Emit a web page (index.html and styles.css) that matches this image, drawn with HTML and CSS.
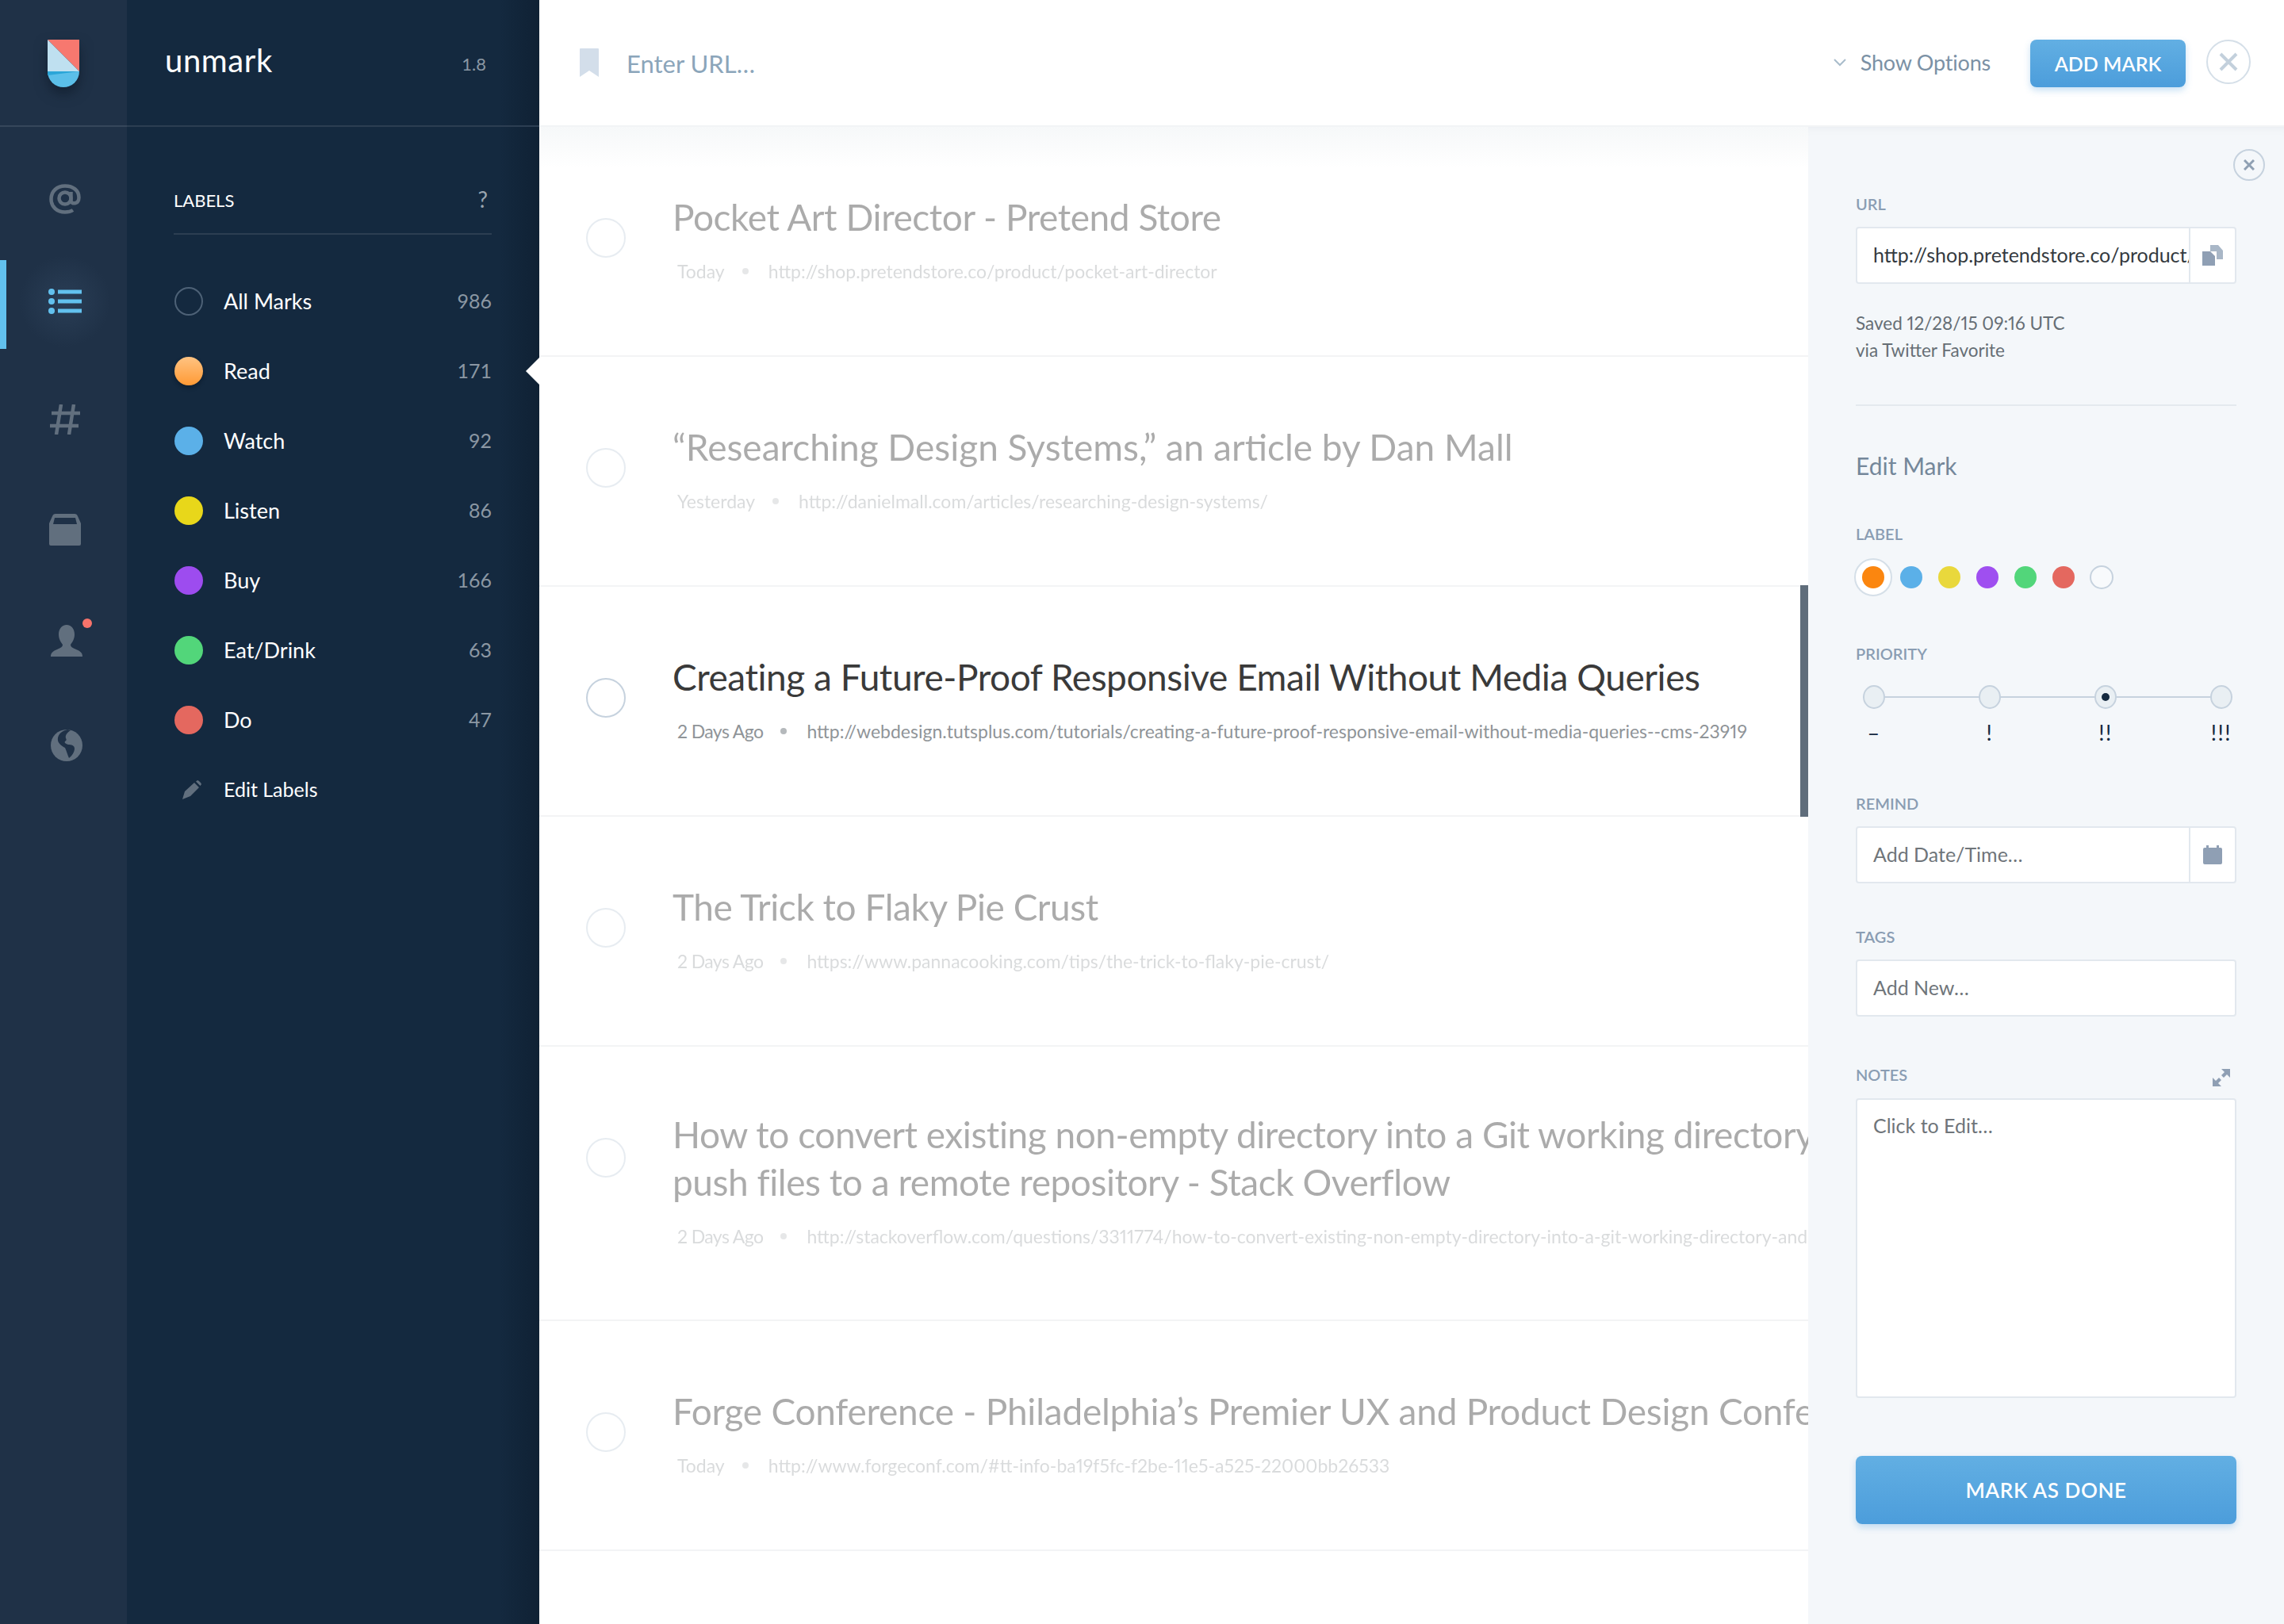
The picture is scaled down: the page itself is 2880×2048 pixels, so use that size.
FILE: index.html
```html
<!DOCTYPE html>
<html lang="en">
<head>
    <meta charset="UTF-8">
    <title>unmark</title>
    <link rel="stylesheet" href="styles.css">
</head>
<body>
<div class="app">
    <div class="rail">
        <div class="rail-logo">
            <svg class="logo" width="40" height="60" viewBox="0 0 40 60">
                <path d="M0 0H40V40Z" fill="#f7786f"/>
                <path d="M0 0L40 40H0Z" fill="#bfe0f0"/>
                <path d="M0 40H40A20 20 0 0 1 0 40Z" fill="#5bbfe9"/>
                <path d="M0 40H40L0 45Z" fill="#2ba6d8"/>
            </svg>
        </div>
        <div class="rail-nav">
            <div class="rail-item at">
                <svg width="40" height="38" viewBox="0 0 40 38" fill="none" stroke="#616f7e" stroke-width="4.500">
                    <circle cx="20" cy="18" r="7.500"/>
                    <path d="M27.500 10V21C27.500 26 37.500 26 37.500 17C37.500 8 30 2.500 20 2.500C10 2.500 2.500 9 2.500 19C2.500 29 10 35.500 20 35.500C24 35.500 27 35 30 33"/>
                </svg>
            </div>
            <div class="rail-item lines active">
                <svg width="42" height="32" viewBox="0 0 42 32" fill="#62c1ee">
                    <circle cx="4" cy="4" r="4"/><circle cx="4" cy="16" r="4"/><circle cx="4" cy="28" r="4"/>
                    <rect x="12" y="1.500" width="30" height="5"/><rect x="12" y="13.500" width="30" height="5"/><rect x="12" y="25.500" width="30" height="5"/>
                </svg>
            </div>
            <div class="rail-item hash">
                <svg width="40" height="38" viewBox="0 0 40 38" fill="none" stroke="#616f7e" stroke-width="4.500">
                    <path d="M15 0L9 38M31 0L25 38M3 11H39M1 27H37"/>
                </svg>
            </div>
            <div class="rail-item box">
                <svg width="40" height="40" viewBox="0 0 40 40">
                    <path fill="#616f7e" fill-rule="evenodd" d="M8 0H32Q35 0 36 3L40 12V38Q40 40 38 40H2Q0 40 0 38V12L4 3Q5 0 8 0ZM7 5L5 13H35L33 5Z"/>
                </svg>
            </div>
            <div class="rail-item person">
                <svg width="40" height="40" viewBox="0 0 40 40">
                    <path fill="#616f7e" d="M20 0C14 0 10 5 10 12C10 18 13 22 15 25C15 28 12 29 8 31C3 33 0 35 0 40H40C40 35 37 33 32 31C28 29 25 28 25 25C27 22 30 18 30 12C30 5 26 0 20 0Z"/>
                </svg>
                <span class="badge"></span>
            </div>
            <div class="rail-item globe">
                <svg width="40" height="40" viewBox="0 0 40 40">
                    <circle cx="20" cy="20" r="20" fill="#616f7e"/>
                    <path fill="#1f3147" d="M21 0C12 2 8 8 9 14C10 18 14 21 18 23C20 27 21 32 23 36C27 33 30 28 30 24C30 20 26 19 22 19C18 18 17 16 18 15C20 14 20 12 19 11C18 8 20 4 25 1Z"/>
                </svg>
            </div>
        </div>
    </div>

    <div class="sidebar">
        <div class="brand">
            <span class="brand-name">unmark</span>
            <span class="brand-version">1.8</span>
        </div>
        <div class="labels">
            <div class="labels-head"><span>LABELS</span><span class="labels-help">?</span></div>
            <div class="label-row"><span class="dot dot-all"></span><span class="label-name">All Marks</span><span class="label-count">986</span></div>
            <div class="label-row"><span class="dot dot-read"></span><span class="label-name">Read</span><span class="label-count">171</span></div>
            <div class="label-row"><span class="dot dot-watch"></span><span class="label-name">Watch</span><span class="label-count">92</span></div>
            <div class="label-row"><span class="dot dot-listen"></span><span class="label-name">Listen</span><span class="label-count">86</span></div>
            <div class="label-row"><span class="dot dot-buy"></span><span class="label-name">Buy</span><span class="label-count">166</span></div>
            <div class="label-row"><span class="dot dot-eat"></span><span class="label-name">Eat/Drink</span><span class="label-count">63</span></div>
            <div class="label-row"><span class="dot dot-do"></span><span class="label-name">Do</span><span class="label-count">47</span></div>
            <div class="label-row edit-row">
                <span class="dot edit-icon">
                    <svg width="24" height="24" viewBox="0 0 24 24"><path fill="#616f7e" d="M0 24L3 14L15 3L21 9L10 20ZM17 1.500L19 0Q20 0 22 2Q24 4 24 5L22.500 7Z"/></svg>
                </span>
                <span class="label-name">Edit Labels</span>
            </div>
        </div>
        <span class="pointer"></span>
    </div>

    <div class="content">
        <div class="topbar">
            <svg class="bookmark" width="24" height="36" viewBox="0 0 24 36"><path fill="#d3deea" d="M1 0H23Q24 0 24 1V36L12 28L0 36V1Q0 0 1 0Z"/></svg>
            <span class="url-hint">Enter URL…</span>
            <svg class="chevron" width="16" height="10" viewBox="0 0 16 10" fill="none" stroke="#a9bccb" stroke-width="2"><path d="M1 1L8 8L15 1"/></svg>
            <span class="show-options">Show Options</span>
            <button class="add-btn">ADD MARK</button>
            <span class="round-close big">
                <svg width="24" height="24" viewBox="0 0 24 24" stroke="#c3d0dc" stroke-width="4"><path d="M2 2L22 22M22 2L2 22"/></svg>
            </span>
        </div>
        <div class="content-body">
            <div class="list">
                <div class="row faded">
                    <span class="check"></span>
                    <div class="row-body">
                        <div class="row-title">Pocket Art Director - Pretend Store</div>
                        <div class="row-meta"><span>Today</span><i></i><span>http://shop.pretendstore.co/product/pocket-art-director</span></div>
                    </div>
                </div>
                <div class="row faded">
                    <span class="check"></span>
                    <div class="row-body">
                        <div class="row-title title-loose">“Researching Design Systems,” an article by Dan Mall</div>
                        <div class="row-meta"><span>Yesterday</span><i></i><span>http://danielmall.com/articles/researching-design-systems/</span></div>
                    </div>
                </div>
                <div class="row current">
                    <span class="check"></span>
                    <div class="row-body">
                        <div class="row-title">Creating a Future-Proof Responsive Email Without Media Queries</div>
                        <div class="row-meta"><span class="days">2 Days Ago</span><i></i><span>http://webdesign.tutsplus.com/tutorials/creating-a-future-proof-responsive-email-without-media-queries--cms-23919</span></div>
                    </div>
                </div>
                <div class="row faded">
                    <span class="check"></span>
                    <div class="row-body">
                        <div class="row-title">The Trick to Flaky Pie Crust</div>
                        <div class="row-meta"><span class="days">2 Days Ago</span><i></i><span>https://www.pannacooking.com/tips/the-trick-to-flaky-pie-crust/</span></div>
                    </div>
                </div>
                <div class="row faded two-line">
                    <span class="check"></span>
                    <div class="row-body">
                        <div class="row-title">How to convert existing non-empty directory into a Git working directory and<br>push files to a remote repository - Stack Overflow</div>
                        <div class="row-meta"><span class="days">2 Days Ago</span><i></i><span>http://stackoverflow.com/questions/3311774/how-to-convert-existing-non-empty-directory-into-a-git-working-directory-and-push-files-to-a-remote</span></div>
                    </div>
                </div>
                <div class="row faded">
                    <span class="check"></span>
                    <div class="row-body">
                        <div class="row-title title-mid">Forge Conference - Philadelphia’s Premier UX and Product Design Conference</div>
                        <div class="row-meta"><span>Today</span><i></i><span>http://www.forgeconf.com/#tt-info-ba19f5fc-f2be-11e5-a525-22000bb26533</span></div>
                    </div>
                </div>
            </div>

            <div class="panel">
                <span class="round-close small">
                    <svg width="14" height="14" viewBox="0 0 14 14" stroke="#8fa0b3" stroke-width="3"><path d="M1 1L13 13M13 1L1 13"/></svg>
                </span>
                <div class="field-label">URL</div>
                <div class="input">
                    <span class="input-text dark">http://shop.pretendstore.co/product/pocket-art-director</span>
                    <span class="input-addon">
                        <svg width="26" height="26" viewBox="0 0 26 26"><path fill="#a9b7c7" d="M10 0H20L26 7V18H18V8H10Z"/><path fill="#8f9fb4" d="M0 8H10L16 14V26H0Z"/></svg>
                    </span>
                </div>
                <div class="saved">Saved 12/28/15 09:16 UTC<br>via Twitter Favorite</div>
                <div class="panel-rule"></div>
                <div class="panel-title">Edit Mark</div>

                <div class="field-label label-head">LABEL</div>
                <div class="swatches">
                    <span class="swatch picked"><span class="swatch-fill orange"></span></span>
                    <span class="swatch"><span class="swatch-fill blue"></span></span>
                    <span class="swatch"><span class="swatch-fill yellow"></span></span>
                    <span class="swatch"><span class="swatch-fill purple"></span></span>
                    <span class="swatch"><span class="swatch-fill green"></span></span>
                    <span class="swatch"><span class="swatch-fill red"></span></span>
                    <span class="swatch"><span class="swatch-fill none"></span></span>
                </div>

                <div class="field-label priority-head">PRIORITY</div>
                <div class="priority-track">
                    <span class="stop"></span>
                    <span class="stop"></span>
                    <span class="stop on"></span>
                    <span class="stop"></span>
                </div>
                <div class="priority-marks">
                    <span>–</span><span>!</span><span>!!</span><span>!!!</span>
                </div>

                <div class="field-label remind-head">REMIND</div>
                <div class="input">
                    <span class="input-text">Add Date/Time…</span>
                    <span class="input-addon">
                        <svg width="24" height="24" viewBox="0 0 24 24"><path fill="#8f9fb4" d="M4 0H7V3H17V0H20V3H22Q24 3 24 5V22Q24 24 22 24H2Q0 24 0 22V5Q0 3 2 3H4Z"/></svg>
                    </span>
                </div>

                <div class="field-label tags-head">TAGS</div>
                <div class="input">
                    <span class="input-text">Add New…</span>
                </div>

                <div class="field-label notes-head">
                    <span>NOTES</span>
                    <svg class="expand" width="22" height="22" viewBox="0 0 22 22"><path fill="#8f9fb4" d="M11 0H22V11L18 7L14 11L11 8L15 4ZM0 22V11L4 15L8 11L11 14L7 18L11 22Z"/></svg>
                </div>
                <div class="notes">Click to Edit…</div>

                <button class="done-btn">MARK AS DONE</button>
            </div>
        </div>
    </div>
</div>
</body>
</html>
```

FILE: styles.css
```css
* {box-sizing: border-box;}
html, body {margin: 0; height: 100%;}
body {font-family: "Lato", "Noto Sans", sans-serif; color: #333; background: #fff; overflow: hidden;}
.app {display: flex; height: 2048px;}

/* icon rail */
.rail {width: 160px; flex: none; background: #1f3147;}
.rail-logo {height: 160px; padding-top: 50px; display: flex; justify-content: center; border-bottom: 2px solid #36475b;}
.logo {filter: drop-shadow(0 8px 8px rgba(10, 20, 32, .55));}
.rail-nav {padding: 72px 0 0 4px;}
.rail-item {display: flex; justify-content: center; position: relative;}
.rail-item.at {margin-bottom: 94px;}
.rail-item.lines {margin-bottom: 114px;}
.rail-item.hash {margin-bottom: 100px;}
.rail-item.box {margin-bottom: 100px;}
.rail-item.person {margin-bottom: 92px; left: 2px;}
.rail-item.globe {left: 2px;}
.rail-item.active::before {content: ""; position: absolute; left: -4px; top: -36px; width: 8px; height: 112px; background: #62c1ee;}
.rail-item.active::after {content: ""; position: absolute; left: 18px; top: -44px; width: 120px; height: 120px; background: radial-gradient(circle, #2a3e56 0, rgba(42, 62, 86, 0) 68%);}
.rail-item.active svg {position: relative; z-index: 1;}
.badge {position: absolute; left: 98px; top: -8px; width: 12px; height: 12px; border-radius: 50%; background: #f7736b;}

/* labels */
.sidebar {width: 520px; flex: none; background: linear-gradient(to right, #14293f 470px, #0f2134 520px); position: relative; color: #fff;}
.brand {height: 160px; padding: 0 67px 0 48px; display: flex; align-items: center; justify-content: space-between; border-bottom: 2px solid #2c3e52;}
.brand-name {font-size: 40px; font-weight: 400; letter-spacing: .6px; padding-bottom: 6px;}
.brand-version {font-size: 22px; font-weight: 400; color: #8b97a3; padding-top: 2px;}
.labels {padding: 0 60px 0 59px;}
.labels-head {height: 136px; padding-top: 80px; margin-bottom: 40px; display: flex; justify-content: space-between; align-items: flex-start; border-bottom: 2px solid #2c3e52; font-size: 22px; font-weight: 400; line-height: 26px;}
.labels-help {font-size: 28px; padding-right: 5px; margin-top: -2px; color: #9aa5b0;}
.label-row {height: 88px; display: flex; align-items: center; font-size: 27px; font-weight: 400;}
.label-row .label-name, .label-row .label-count {padding-bottom: 2px;}
.dot {width: 36px; height: 36px; border-radius: 50%; margin: 0 26px 0 1px; flex: none;}
.dot-all {border: 2px solid #4d6176;}
.dot-read {background: linear-gradient(#ffc382, #ff9a35); box-shadow: 0 3px 5px rgba(5, 15, 25, .4);}
.dot-watch {background: #5bb0e8;}
.dot-listen {background: #e8d71a;}
.dot-buy {background: #9d4cef;}
.dot-eat {background: #52d67a;}
.dot-do {background: #e4685f;}
.label-name {flex: 1;}
.label-count {font-size: 25px; color: #8b97a3;}
.edit-row .label-name {font-size: 25px;}
.edit-icon {display: flex; align-items: center; justify-content: center; padding-left: 8px;}
.pointer {position: absolute; right: 0; top: 451px; width: 0; height: 0; border: 17px solid transparent; border-left-width: 0; border-right-color: #fff;}

/* top bar */
.content {flex: 1; min-width: 0; display: flex; flex-direction: column;}
.topbar {height: 160px; flex: none; display: flex; align-items: center; padding: 0 42px 0 51px; border-bottom: 2px solid #f2f4f6;}
.url-hint {font-size: 31px; font-weight: 400; color: #8ba5ba; margin-left: 35px; padding-top: 2px; flex: 1;}
.chevron {margin-right: 18px;}
.show-options {font-size: 27px; color: #7b91a5; font-weight: 400; letter-spacing: -.2px; margin-right: 50px; padding-bottom: 2px;}
.add-btn {width: 196px; height: 60px; border: 0; border-radius: 8px; background: linear-gradient(#62afe3, #4c9ddb); color: #fff; font-family: inherit; font-size: 25px; font-weight: 600; box-shadow: 0 4px 8px rgba(76, 157, 219, .3); margin: 2px 26px 0 0;}
.round-close {display: flex; align-items: center; justify-content: center; border-radius: 50%; border: 2px solid #d5dfe8;}
.round-close.big {width: 56px; height: 56px; margin-top: -2px;}
.round-close.small {width: 40px; height: 40px; position: absolute; right: 24px; top: 28px; border-color: #c6d2de;}

/* marks list */
.content-body {flex: 1; display: flex; min-height: 0;}
.list {flex: 1; min-width: 0; overflow: hidden; background: linear-gradient(#f6f8f9, #fff 52px);}
.row {display: flex; position: relative; padding: 84px 0 91px 59px; border-bottom: 2px solid #f3f4f5; white-space: nowrap;}
.row.two-line {padding: 81px 0 90px 59px;}
.check {width: 50px; height: 50px; flex: none; border-radius: 50%; border: 2px solid #c6d2de; margin: 31px 59px 0 0;}
.two-line .check {margin-top: 34px;}
.row-title {font-size: 46px; line-height: 60px; font-weight: 400; color: #3a3a3a; letter-spacing: -.45px;}
.row-title.title-loose {letter-spacing: 0;}
.row-title.title-mid {letter-spacing: -.25px;}
.row-meta {margin: 23px 0 0 6px; display: flex; align-items: center; font-size: 23px; line-height: 30px; font-weight: 400; color: #8f9498; font-variant-numeric: proportional-nums;}
.row-meta .days {letter-spacing: -.6px;}
.row-meta i {width: 8px; height: 8px; border-radius: 50%; background: #b5b9bc; margin: 0 25px 0 22px;}
.row.faded .check, .row.faded .row-title {opacity: .42;}
.row.faded .row-meta {opacity: .33;}
.row.current::after {content: ""; position: absolute; right: 0; top: -2px; bottom: -2px; width: 10px; background: #5f6d7b;}

/* side panel */
.panel {width: 600px; flex: none; padding: 85px 60px 0; background: #f4f7fa; position: relative; box-shadow: inset 0 12px 12px -12px rgba(130, 140, 150, .12);}
.field-label {font-size: 20px; line-height: 24px; font-weight: 600; color: #8a9db3; margin-bottom: 17px;}
.input {height: 72px; display: flex; border: 2px solid #e2e8ee; border-radius: 4px; background: #fff;}
.input-text {flex: 1; min-width: 0; overflow: hidden; white-space: nowrap; padding-left: 20px; font-size: 25px; line-height: 66px; color: #6f757a; font-weight: 400;}
.input-text.dark {color: #343a40;}
.input-addon {width: 58px; flex: none; display: flex; align-items: center; justify-content: center; border-left: 2px solid #e2e8ee;}
.saved {margin-top: 33px; font-size: 22.500px; line-height: 34px; color: #666e75; font-variant-numeric: proportional-nums;}
.panel-rule {height: 2px; margin-top: 51px; background: #e4e9ee;}
.panel-title {margin-top: 55px; font-size: 30px; line-height: 40px; color: #74879a;}
.field-label.label-head {margin: 54px 0 19px;}
.swatches {display: flex; height: 48px; align-items: center; margin-left: -2px;}
.swatch {width: 48px; height: 48px; display: flex; align-items: center; justify-content: center; border-radius: 50%;}
.swatch.picked {background: #fff; border: 2px solid #d5dfe8;}
.swatch-fill {width: 28px; height: 28px; border-radius: 50%;}
.orange {background: #fb860f;}
.blue {background: #5bb0e8;}
.yellow {background: #e9d83c;}
.purple {background: #9f4ff0;}
.green {background: #52d67a;}
.red {background: #e4685f;}
.none {width: 30px; height: 30px; background: #f8fafc; border: 2px solid #c6d2de;}
.field-label.priority-head {margin: 60px 0 28px;}
.priority-track {display: flex; justify-content: space-between; margin: 0 5px 0 9px; height: 30px; align-items: center; background: linear-gradient(#c6d2de, #c6d2de) center / 100% 2px no-repeat;}
.stop {width: 28px; height: 30px; border-radius: 50%; border: 2px solid #c6d2de; background: #e9eff3; display: flex; align-items: center; justify-content: center;}
.stop.on::after {content: ""; width: 10px; height: 10px; border-radius: 50%; background: #14293f;}
.priority-marks {display: flex; justify-content: space-between; margin: 15px 5px 0 9px; font-size: 27px; line-height: 30px; font-weight: 400; letter-spacing: 1.500px; color: #14293f;}
.priority-marks span {width: 28px; display: flex; justify-content: center; white-space: nowrap;}
.field-label.remind-head {margin-top: 62px;}
.field-label.tags-head {margin-top: 55px;}
.field-label.notes-head {margin: 61px 0 18px; display: flex; justify-content: space-between; align-items: center; padding-right: 8px;}
.expand {position: relative; top: 4px;}
.notes {height: 378px; padding: 15px 20px; border: 2px solid #e2e8ee; border-radius: 4px; background: #fff; font-size: 25px; line-height: 34px; color: #6f757a;}
.done-btn {display: block; width: 100%; height: 86px; margin-top: 73px; border: 0; border-radius: 8px; background: linear-gradient(#62afe3, #4c9ddb); color: #fff; font-family: inherit; font-size: 26px; font-weight: 600; letter-spacing: .6px; box-shadow: 0 4px 8px rgba(76, 157, 219, .3);}
```
